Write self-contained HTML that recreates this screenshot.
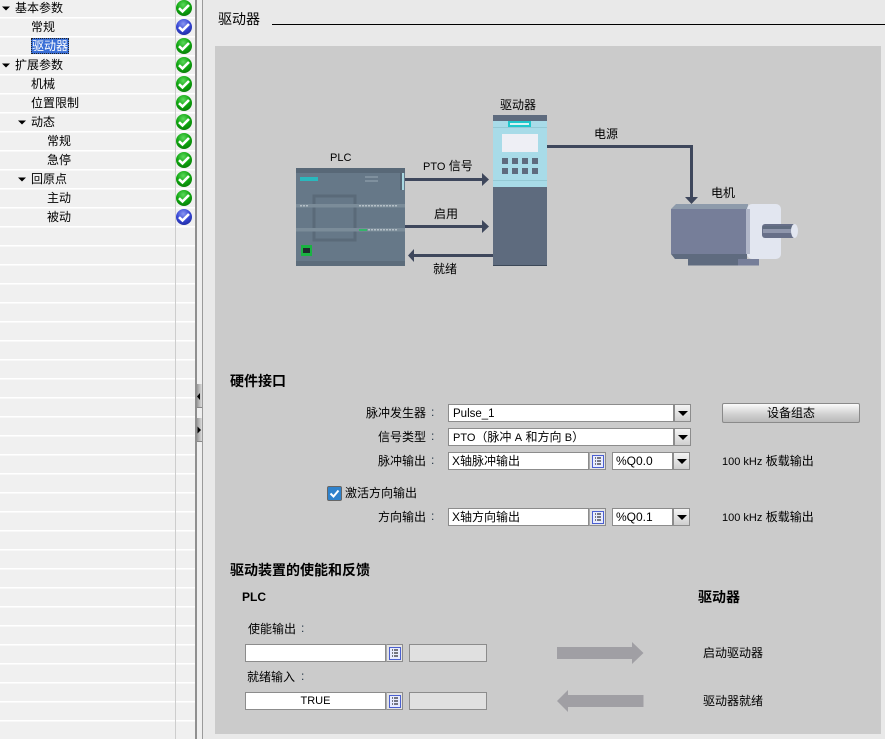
<!DOCTYPE html>
<html lang="zh"><head><meta charset="utf-8"><style>
html,body{margin:0;padding:0}
body{width:885px;height:739px;overflow:hidden;position:relative;background:#e9e9e9;font:12px "Liberation Sans","WenQuanYi Zen Hei","Noto Sans CJK SC",sans-serif;color:#000}
.a{position:absolute}
.t{position:absolute;white-space:nowrap;line-height:16px;height:16px}
.l{font-size:11px}
.box{position:absolute;box-sizing:border-box;background:#fff;border:1px solid #8c8c8c;height:18px;line-height:16px;padding-left:3px;white-space:nowrap}
.btn{position:absolute;box-sizing:border-box;width:17px;height:18px;border:1px solid #8c8c8c;background:linear-gradient(#f4f4f4,#cfcfcf)}
.btn:after{content:"";position:absolute;left:3px;top:6px;border:5px solid transparent;border-top:5px solid #000;border-bottom:0}
.lst{position:absolute;box-sizing:border-box;width:17px;height:18px;border:1px solid #8c8c8c;border-left:1px solid #aaa;background:#e4e4e4}
.lst svg{position:absolute;left:2px;top:2px}
.h{font-weight:bold;font-size:14px}
.c{color:#234}
</style></head><body>
<div class="a" style="left:0;top:0;width:195px;height:739px;background:repeating-linear-gradient(#f0f0f0 0 17px,#fff 17px 18.3px,#f0f0f0 18.3px 19px)"></div>
<div class="a" style="left:175px;top:0;width:1px;height:739px;background:#cdcdcd"></div>
<svg class="a" style="left:0;top:0" width="195" height="230">
<defs><radialGradient id="g" cx="45%" cy="30%" r="75%"><stop offset="0" stop-color="#5cd85c"/><stop offset=".55" stop-color="#0fa50f"/><stop offset="1" stop-color="#087a08"/></radialGradient>
<radialGradient id="b" cx="45%" cy="30%" r="75%"><stop offset="0" stop-color="#8a97f0"/><stop offset=".55" stop-color="#3646d4"/><stop offset="1" stop-color="#1d2a9e"/></radialGradient>
<g id="c"><path d="M-5 .2 L-1.500 3.500 L5 -3" fill="none" stroke="#fff" stroke-width="2.600"/></g></defs>
<g>
<circle cx="184" cy="8" r="8" fill="url(#g)"/><use href="#c" x="184" y="8"/>
<circle cx="184" cy="27" r="8" fill="url(#b)"/><use href="#c" x="184" y="27"/>
<circle cx="184" cy="46" r="8" fill="url(#g)"/><use href="#c" x="184" y="46"/>
<circle cx="184" cy="65" r="8" fill="url(#g)"/><use href="#c" x="184" y="65"/>
<circle cx="184" cy="84" r="8" fill="url(#g)"/><use href="#c" x="184" y="84"/>
<circle cx="184" cy="103" r="8" fill="url(#g)"/><use href="#c" x="184" y="103"/>
<circle cx="184" cy="122" r="8" fill="url(#g)"/><use href="#c" x="184" y="122"/>
<circle cx="184" cy="141" r="8" fill="url(#g)"/><use href="#c" x="184" y="141"/>
<circle cx="184" cy="160" r="8" fill="url(#g)"/><use href="#c" x="184" y="160"/>
<circle cx="184" cy="179" r="8" fill="url(#g)"/><use href="#c" x="184" y="179"/>
<circle cx="184" cy="198" r="8" fill="url(#g)"/><use href="#c" x="184" y="198"/>
<circle cx="184" cy="217" r="8" fill="url(#b)"/><use href="#c" x="184" y="217"/>
</g>
<g fill="#000">
<path d="M2 6.500h8l-4 4z"/><path d="M2 63.500h8l-4 4z"/><path d="M18 120.500h8l-4 4z"/><path d="M18 177.500h8l-4 4z"/>
</g>
</svg>
<div class="t" style="left:15px;top:0">基本参数</div>
<div class="t" style="left:31px;top:19px">常规</div>
<div class="a" style="left:31px;top:38px;width:38px;height:16px;background:#3a6fd6;outline:1px dotted #222;outline-offset:-1px"></div>
<div class="t" style="left:32px;top:38px;color:#fff">驱动器</div>
<div class="t" style="left:15px;top:57px">扩展参数</div>
<div class="t" style="left:31px;top:76px">机械</div>
<div class="t" style="left:31px;top:95px">位置限制</div>
<div class="t" style="left:31px;top:114px">动态</div>
<div class="t" style="left:47px;top:133px">常规</div>
<div class="t" style="left:47px;top:152px">急停</div>
<div class="t" style="left:31px;top:171px">回原点</div>
<div class="t" style="left:47px;top:190px">主动</div>
<div class="t" style="left:47px;top:209px">被动</div>

<div class="a" style="left:195px;top:0;width:2px;height:739px;background:#8f8f8f"></div>
<div class="a" style="left:197px;top:0;width:5px;height:739px;background:#efefef"></div>
<div class="a" style="left:202px;top:0;width:1px;height:739px;background:#9a9a9a"></div>
<div class="a" style="left:197px;top:384px;width:5px;height:23px;background:linear-gradient(90deg,#999,#ddd);border-bottom:1px solid #888"></div>
<div class="a" style="left:197px;top:418px;width:5px;height:23px;background:linear-gradient(90deg,#999,#ddd);border-bottom:1px solid #888"></div>
<svg class="a" style="left:195px;top:390px" width="8" height="50"><path d="M2 6.500L5 3V10z" fill="#000"/><path d="M2.500 36.500V43.500L6 40z" fill="#000"/></svg>

<div class="t" style="left:218px;top:11px;font-size:14px">驱动器</div>
<div class="a" style="left:272px;top:24px;width:613px;height:1px;background:#000"></div>

<div class="a" style="left:215px;top:46px;width:666px;height:688px;background:#cbcbcb"></div>

<svg class="a" style="left:285px;top:100px" width="530" height="180">
<!-- PLC body -->
<rect x="11" y="68" width="109" height="98" fill="#667888"/>
<rect x="11" y="68" width="109" height="5" fill="#586877"/>
<rect x="11" y="161" width="109" height="5" fill="#5c6c7b"/>
<rect x="15" y="77" width="18" height="4" fill="#2ab8bd"/>
<rect x="80" y="76" width="13" height="2" fill="#7f909e"/><rect x="80" y="80" width="13" height="2" fill="#7f909e"/>
<rect x="115" y="73" width="2" height="17" fill="#566675"/>
<rect x="117" y="73" width="2" height="17" fill="#a9d8e2"/>
<rect x="29" y="96" width="41" height="44" fill="none" stroke="#5a6a79" stroke-width="3"/>
<rect x="11" y="104" width="109" height="3.500" fill="#7b8c99"/>
<rect x="11" y="128" width="109" height="3.500" fill="#7b8c99"/>
<path d="M15 105.800H23M74 105.800H113M74 129.800H113" stroke="#b4bfc7" stroke-width="1.500" stroke-dasharray="2 1" fill="none"/>
<rect x="74" y="129" width="8" height="2" fill="#34b56a"/>
<rect x="16" y="145" width="11" height="11" fill="#19b342"/>
<rect x="18" y="148" width="7" height="5" fill="#1e2a2c"/>
<!-- Drive -->
<rect x="208" y="15" width="54" height="151" fill="#5e6b7e"/>
<rect x="208" y="21" width="54" height="66" fill="#a8dbe8"/>
<rect x="208" y="27" width="54" height="1" fill="#94c9d5"/><rect x="208" y="80" width="54" height="1" fill="#94c9d5"/>
<rect x="208" y="165" width="54" height="1" fill="#3c4858"/>
<rect x="223" y="21" width="23" height="6" fill="#1fc8cc"/>
<rect x="225" y="23" width="19" height="2" fill="#d8f4f4"/>
<rect x="217" y="34" width="36" height="18" fill="#eeeff5"/>
<g fill="#5e6b7e"><rect x="217" y="58" width="6" height="6"/><rect x="227" y="58" width="6" height="6"/><rect x="237" y="58" width="6" height="6"/><rect x="247" y="58" width="6" height="6"/><rect x="217" y="68" width="6" height="6"/><rect x="227" y="68" width="6" height="6"/><rect x="237" y="68" width="6" height="6"/><rect x="247" y="68" width="6" height="6"/></g>
<!-- arrows -->
<g fill="#3e475c">
<rect x="120" y="78" width="78" height="3"/><path d="M197 73l7 6.500-7 6.500z"/>
<rect x="120" y="125" width="78" height="3"/><path d="M197 120l7 6.500-7 6.500z"/>
<rect x="128" y="154" width="80" height="3"/><path d="M129 149l-6 6.500 6 6.500z"/>
<rect x="262" y="45" width="146" height="3"/><rect x="405" y="45" width="3" height="53"/><path d="M400 97h13l-6.500 7z"/>
</g>
<!-- motor -->
<path d="M386 109l5-5h72v5z" fill="#8e9bab"/>
<rect x="386" y="109" width="76" height="45" fill="#767e99"/>
<path d="M386 154h76v5h-72z" fill="#5f6b7f"/>
<rect x="403" y="159" width="50" height="6.500" fill="#5f6b7f"/>
<rect x="453" y="159" width="21" height="6.500" fill="#767e99"/>
<rect x="461" y="109" width="5" height="45" fill="#b0b6c8"/>
<rect x="462" y="104" width="34" height="55" rx="5" fill="#e2e6f0" style="clip-path:none"/>
<rect x="461" y="109" width="4" height="45" fill="#b0b6c8"/>
<rect x="477" y="124" width="34" height="14" rx="3" fill="#676f88"/>
<rect x="478" y="126" width="31" height="3" fill="#5f6b7f"/>
<rect x="478" y="129" width="31" height="4" fill="#8f96ac"/>
<ellipse cx="509.500" cy="131" rx="3.500" ry="7" fill="#e2e6f0"/>
</svg>

<div class="t l" style="left:330px;top:150px">PLC</div>
<div class="t" style="left:500px;top:97px">驱动器</div>
<div class="t" style="left:423px;top:158px"><span class="l">PTO</span> 信号</div>
<div class="t" style="left:434px;top:206px">启用</div>
<div class="t" style="left:433px;top:261px">就绪</div>
<div class="t" style="left:594px;top:126px">电源</div>
<div class="t" style="left:711px;top:185px">电机</div>

<div class="t h" style="left:230px;top:373px">硬件接口</div>
<div class="t" style="left:366px;top:405px">脉冲发生器</div><div class="t c" style="left:431px;top:404px">:</div>
<div class="t" style="left:378px;top:429px">信号类型</div><div class="t c" style="left:431px;top:428px">:</div>
<div class="t" style="left:378px;top:453px">脉冲输出</div><div class="t c" style="left:431px;top:452px">:</div>
<div class="t" style="left:378px;top:509px">方向输出</div><div class="t c" style="left:431px;top:508px">:</div>

<div class="box" style="left:448px;top:404px;width:226px;padding-left:4px"><span style="font-size:11.5px">Pulse_1</span></div>
<div class="btn" style="left:674px;top:404px"></div>
<div class="box" style="left:448px;top:428px;width:226px;padding-left:4px"><span class="l">PTO</span>（脉冲 <span class="l">A</span> 和方向 <span class="l">B</span>）</div>
<div class="btn" style="left:674px;top:428px"></div>

<div class="box" style="left:448px;top:452px;width:141px;padding-left:3px">X轴脉冲输出</div>
<div class="lst" style="left:589px;top:452px"><svg width="12" height="13"><rect x=".5" y=".5" width="11" height="12" fill="#e8ecff" stroke="#4a5fd0"/><path d="M3 3h1M5 3h4M3 6h1M5 6h4M3 9h1M5 9h4" stroke="#000" fill="none"/></svg></div>
<div class="box" style="left:612px;top:452px;width:61px">%Q0.0</div>
<div class="btn" style="left:673px;top:452px"></div>
<div class="t" style="left:722px;top:453px"><span class="l">100 kHz</span> 板载输出</div>

<div class="a" style="left:327px;top:486px;box-sizing:border-box;width:15px;height:15px;border:1px solid #666;border-radius:2px;background:#2f82cc"></div>
<svg class="a" style="left:327px;top:486px" width="15" height="15"><path d="M3.500 7.500l3 3 5-6" fill="none" stroke="#fff" stroke-width="2"/></svg>
<div class="t" style="left:345px;top:485px">激活方向输出</div>

<div class="box" style="left:448px;top:508px;width:141px;padding-left:3px">X轴方向输出</div>
<div class="lst" style="left:589px;top:508px"><svg width="12" height="13"><rect x=".5" y=".5" width="11" height="12" fill="#e8ecff" stroke="#4a5fd0"/><path d="M3 3h1M5 3h4M3 6h1M5 6h4M3 9h1M5 9h4" stroke="#000" fill="none"/></svg></div>
<div class="box" style="left:612px;top:508px;width:61px">%Q0.1</div>
<div class="btn" style="left:673px;top:508px"></div>
<div class="t" style="left:722px;top:509px"><span class="l">100 kHz</span> 板载输出</div>

<div class="a" style="left:722px;top:403px;box-sizing:border-box;width:138px;height:20px;border:1px solid #8a8a8a;border-radius:2px;background:linear-gradient(#fbfbfb,#d2d2d2 55%,#b9b9b9);text-align:center;line-height:18px">设备组态</div>

<div class="t h" style="left:230px;top:562px">驱动装置的使能和反馈</div>
<div class="t" style="left:242px;top:589px;font-weight:bold">PLC</div>
<div class="t h" style="left:698px;top:589px">驱动器</div>

<div class="t" style="left:248px;top:621px">使能输出</div><div class="t c" style="left:301px;top:620px">:</div>
<div class="box" style="left:245px;top:644px;width:141px"></div>
<div class="lst" style="left:386px;top:644px"><svg width="12" height="13"><rect x=".5" y=".5" width="11" height="12" fill="#e8ecff" stroke="#4a5fd0"/><path d="M3 3h1M5 3h4M3 6h1M5 6h4M3 9h1M5 9h4" stroke="#000" fill="none"/></svg></div>
<div class="box" style="left:409px;top:644px;width:78px;background:#e0e0e0"></div>
<div class="t" style="left:247px;top:669px">就绪输入</div><div class="t c" style="left:301px;top:668px">:</div>
<div class="box l" style="left:245px;top:692px;width:141px;text-align:center;padding:0">TRUE</div>
<div class="lst" style="left:386px;top:692px"><svg width="12" height="13"><rect x=".5" y=".5" width="11" height="12" fill="#e8ecff" stroke="#4a5fd0"/><path d="M3 3h1M5 3h4M3 6h1M5 6h4M3 9h1M5 9h4" stroke="#000" fill="none"/></svg></div>
<div class="box" style="left:409px;top:692px;width:78px;background:#e0e0e0"></div>

<svg class="a" style="left:555px;top:640px" width="92" height="75">
<path d="M2 7H77V2L88.500 13 77 24V19H2z" fill="#a09fa4"/>
<path d="M88.500 55H13V50L2 61 13 72V67H88.500z" fill="#a09fa4"/>
</svg>
<div class="t" style="left:703px;top:645px">启动驱动器</div>
<div class="t" style="left:703px;top:693px">驱动器就绪</div>
</body></html>
